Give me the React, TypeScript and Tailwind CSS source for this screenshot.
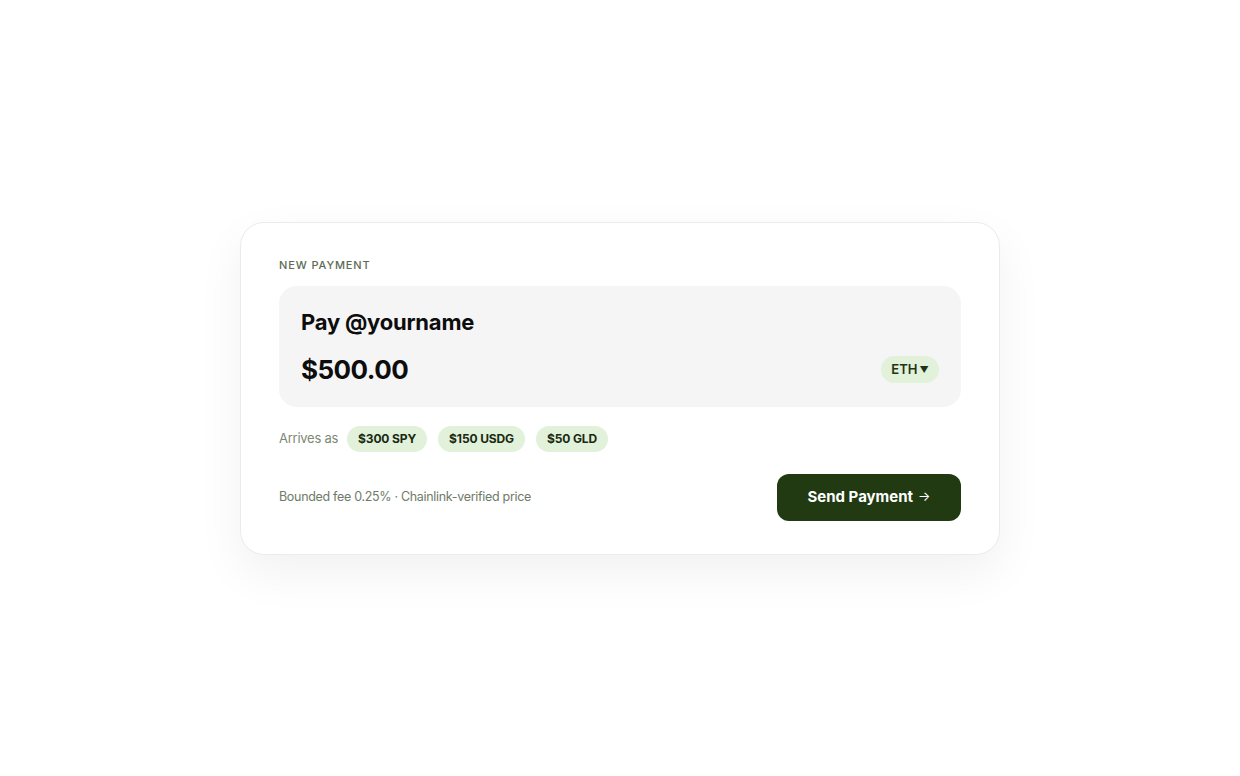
export default function App() {
    const splits = ["$300 SPY", "$150 USDG", "$50 GLD"];

    return (
        <div
            className="flex min-h-screen items-center justify-center bg-white"
            style={{ fontFamily: "Inter, 'Noto Sans', sans-serif" }}
        >
            <section className="w-[760px] rounded-[24px] border border-[#ebebeb] bg-white px-[38px] pt-[35px] pb-[33px] shadow-[0_18px_48px_rgba(0,0,0,0.06)]">
                <p className="text-[11px] leading-[14px] font-medium tracking-[0.08em] text-[#5d6b55]">
                    NEW PAYMENT
                </p>

                <div className="mt-[14px] rounded-[18px] bg-[#f5f5f5] px-[22px] pt-[22px] pb-[19px]">
                    <h2 className="text-[22px] leading-[28px] font-bold tracking-[-0.01em] text-[#0d0d0d]">
                        Pay @yourname
                    </h2>
                    <div className="mt-[16px] flex h-[36px] items-center justify-between">
                        <span className="text-[26px] leading-[36px] font-bold tracking-[-0.02em] text-[#0d0d0d]">
                            $500.00
                        </span>
                        <button
                            type="button"
                            className="flex h-[27px] w-[58px] items-center justify-center rounded-full bg-[#e1f1da] text-[13px] font-semibold text-[#1f3414]"
                        >
                            ETH<span className="ml-[2px] text-[9px]">▼</span>
                        </button>
                    </div>
                </div>

                <div className="mt-[19px] flex h-[26px] items-center gap-[11px]">
                    <span className="mr-[-2px] text-[13px] tracking-[-0.02em] text-[#7d8775]">Arrives as</span>
                    {splits.map((s) => (
                        <span
                            key={s}
                            className="flex h-[26px] items-center rounded-full bg-[#e1f1da] px-[11px] text-[12px] font-bold tracking-[-0.01em] text-[#1a2a12]"
                        >
                            {s}
                        </span>
                    ))}
                </div>

                <div className="mt-[22px] flex items-center justify-between">
                    <span className="text-[12.5px] tracking-[-0.025em] text-[#6f7a68]">
                        Bounded fee 0.25% · Chainlink-verified price
                    </span>
                    <button
                        type="button"
                        className="flex h-[47px] w-[184px] items-center justify-center rounded-[12px] bg-[#213a12] text-[15px] font-bold text-white"
                    >
                        Send Payment <span className="ml-[5px] text-[13px] font-normal">→</span>
                    </button>
                </div>
            </section>
        </div>
    );
}
